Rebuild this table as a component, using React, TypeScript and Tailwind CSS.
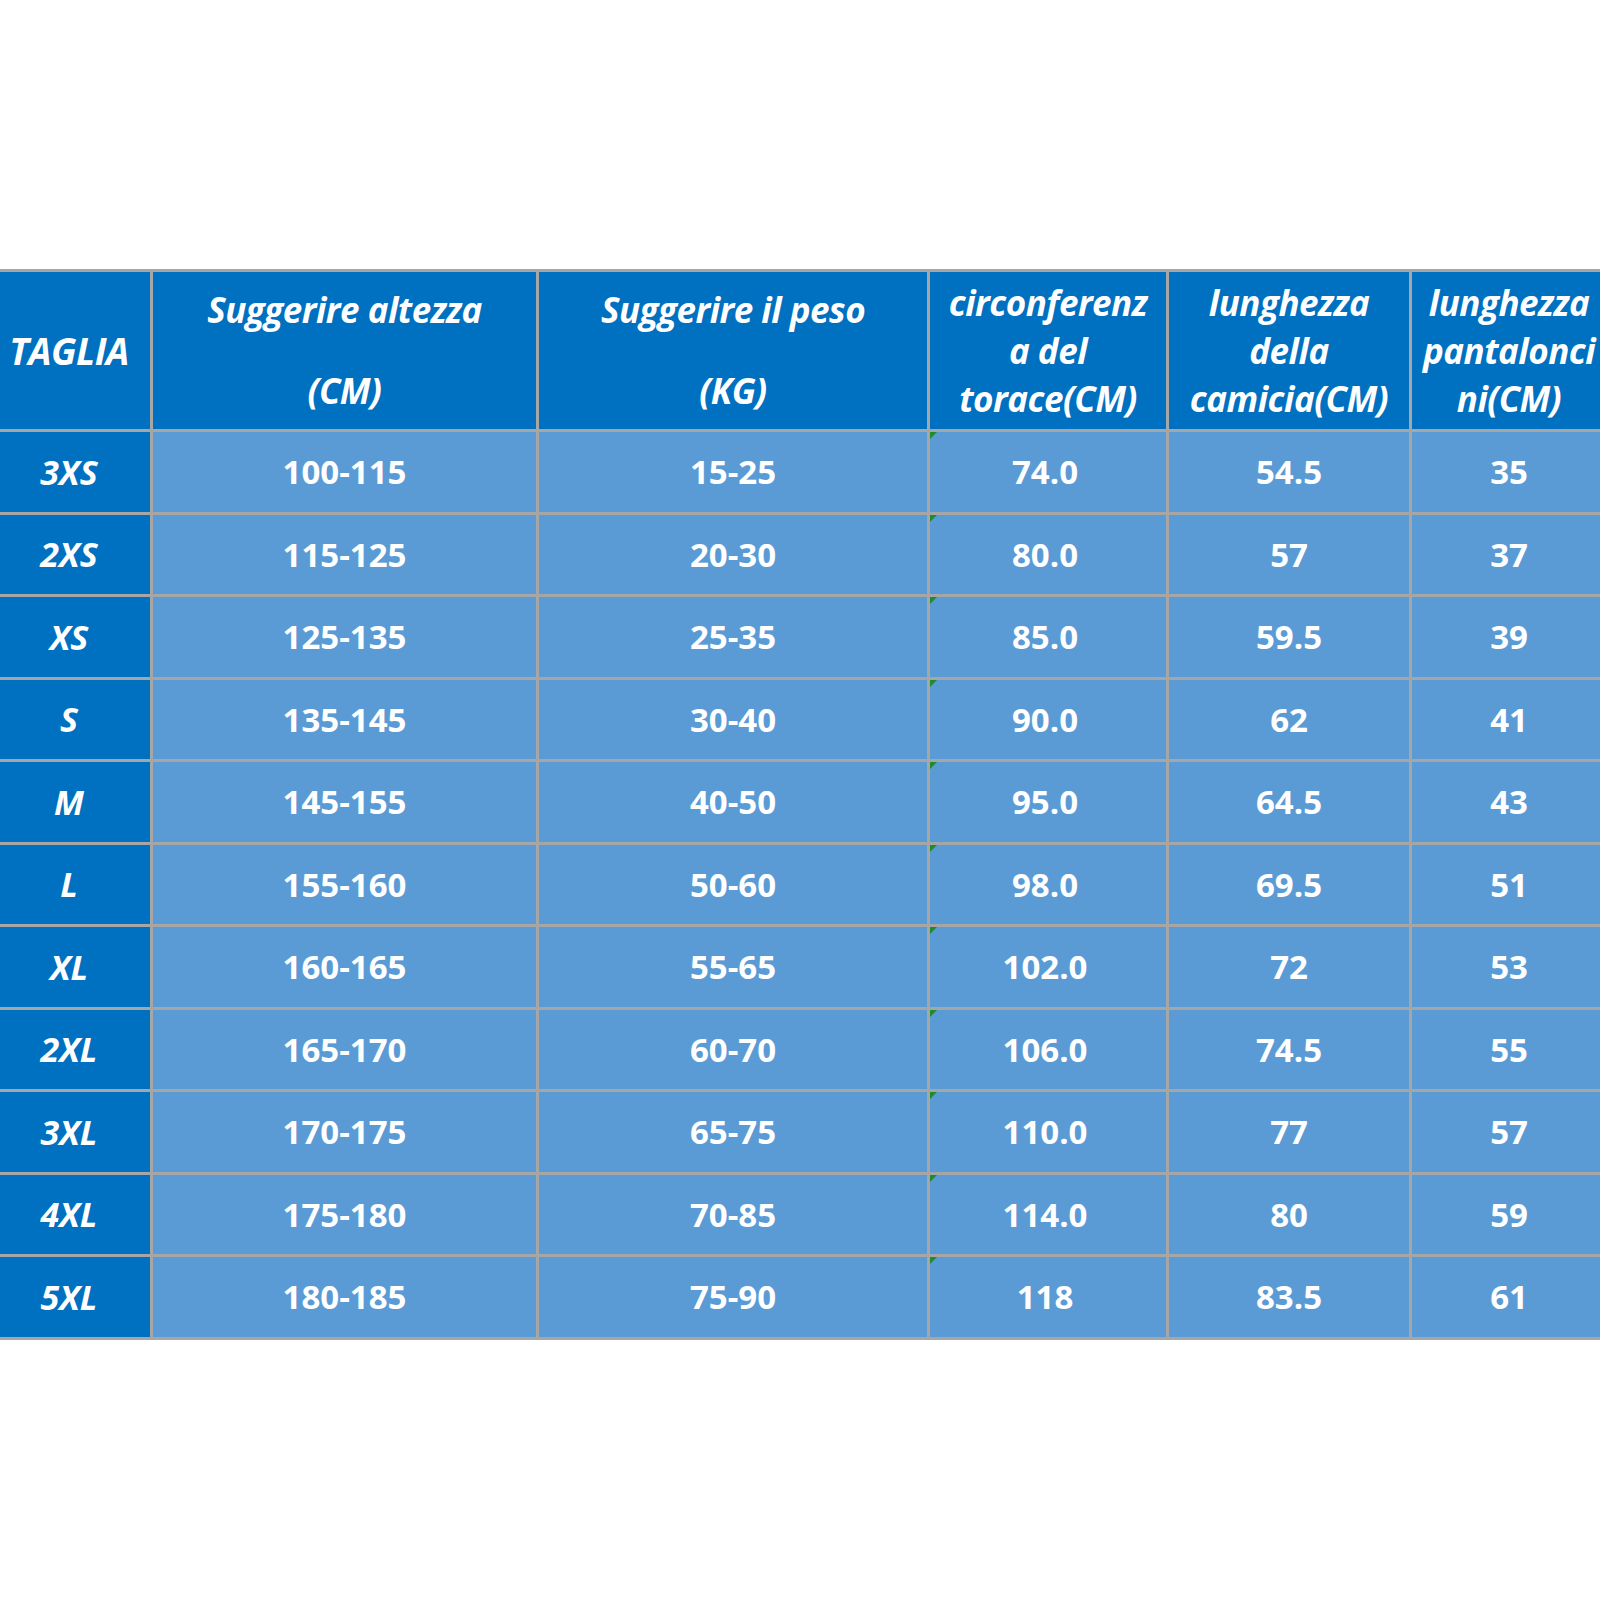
import React from 'react';

const rows = [
    ['3XS', '100-115', '15-25', '74.0', '54.5', '35'],
    ['2XS', '115-125', '20-30', '80.0', '57', '37'],
    ['XS', '125-135', '25-35', '85.0', '59.5', '39'],
    ['S', '135-145', '30-40', '90.0', '62', '41'],
    ['M', '145-155', '40-50', '95.0', '64.5', '43'],
    ['L', '155-160', '50-60', '98.0', '69.5', '51'],
    ['XL', '160-165', '55-65', '102.0', '72', '53'],
    ['2XL', '165-170', '60-70', '106.0', '74.5', '55'],
    ['3XL', '170-175', '65-75', '110.0', '77', '57'],
    ['4XL', '175-180', '70-85', '114.0', '80', '59'],
    ['5XL', '180-185', '75-90', '118', '83.5', '61'],
];

// piccolo triangolo verde tipo Excel (avviso numero come testo)
const GreenMark = () => (
    <svg className="absolute left-0 top-0" width="7" height="7" viewBox="0 0 7 7">
        <polygon points="0,0 7,0 0,7" fill="#1f8a2e" />
    </svg>
);

const headCell = 'bg-[#0070c0] text-white font-bold italic flex flex-col items-center justify-center text-center text-[35px] tracking-[-0.5px]';
const dataCell = 'bg-[#5b9bd5] text-white font-bold flex items-center justify-center relative text-[33px]';

export default function App() {
    return (
        <div
            className="w-[1600px] h-[1600px] bg-white overflow-hidden pt-[269px]"
            style={{ fontFamily: '"Open Sans", "Noto Sans", sans-serif' }}
        >
            <div className="grid w-max grid-cols-[150px_383px_388px_236px_240px_194px] grid-rows-[157px_80px_79px_80px_79px_80px_79px_80px_79px_80px_79px_80px] gap-[3px] py-[3px] bg-[#a6a6a6]">
                <div className={`${headCell} pr-[12px]`}>
                    <span className="text-[37px]">TAGLIA</span>
                </div>
                <div className={`${headCell} gap-[33px]`}>
                    <span className="leading-[48px]">Suggerire altezza</span>
                    <span className="leading-[48px]">(CM)</span>
                </div>
                <div className={`${headCell} gap-[33px]`}>
                    <span className="leading-[48px]">Suggerire il peso</span>
                    <span className="leading-[48px]">(KG)</span>
                </div>
                <div className={`${headCell} leading-[48px] whitespace-nowrap`}>
                    <span>circonferenz</span>
                    <span>a del</span>
                    <span>torace(CM)</span>
                </div>
                <div className={`${headCell} leading-[48px] whitespace-nowrap`}>
                    <span>lunghezza</span>
                    <span>della</span>
                    <span>camicia(CM)</span>
                </div>
                <div className={`${headCell} leading-[48px] whitespace-nowrap`}>
                    <span>lunghezza</span>
                    <span>pantalonci</span>
                    <span>ni(CM)</span>
                </div>

                {rows.map((r) => (
                    <React.Fragment key={r[0]}>
                        <div className="bg-[#0070c0] text-white font-bold italic flex items-center justify-center pr-[12px] text-[34px]">
                            {r[0]}
                        </div>
                        <div className={dataCell}>{r[1]}</div>
                        <div className={dataCell}>{r[2]}</div>
                        <div className={`${dataCell} pr-[6px]`}>
                            <GreenMark />
                            {r[3]}
                        </div>
                        <div className={dataCell}>{r[4]}</div>
                        <div className={dataCell}>{r[5]}</div>
                    </React.Fragment>
                ))}
            </div>
        </div>
    );
}
